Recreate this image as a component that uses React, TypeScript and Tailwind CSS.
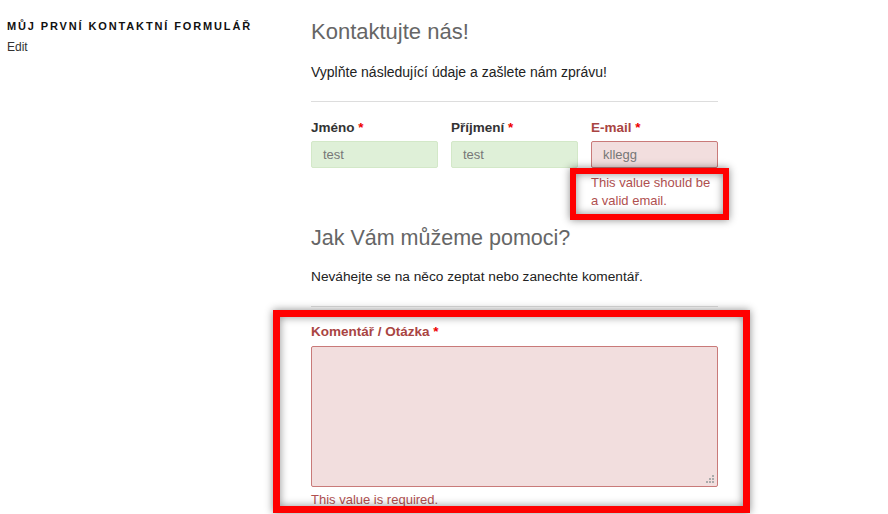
import React from "react";

const font = { fontFamily: '"Liberation Sans", Arial, sans-serif' };

function Label({ text, error }: { text: string; error?: boolean }) {
  return (
    <div className={`text-[13.5px] leading-[20px] font-bold ${error ? "text-[#a94442]" : "text-[#333]"}`}>
      {text} <span className="text-[#e00]">*</span>
    </div>
  );
}

function Field({ label, value, error }: { label: string; value: string; error?: boolean }) {
  return (
    <div className="w-[127px]">
      <Label text={label} error={error} />
      <div
        className={`mt-[3px] h-[27px] rounded-[2px] border px-[11px] flex items-center text-[13px] text-[#777] ${
          error ? "bg-[#f2dede] border-[#c97a79]" : "bg-[#dff0d8] border-[#d3e8c8]"
        }`}
      >
        {value}
      </div>
    </div>
  );
}

export default function App() {
  return (
    <div className="relative w-[888px] h-[514px] overflow-hidden bg-white flex" style={font}>
      <aside className="w-[311px] shrink-0 pl-[7px] pt-[19px]">
        <div className="text-[11px] leading-[14px] font-extrabold tracking-[0.17em] text-[#111] whitespace-nowrap">
          MŮJ PRVNÍ KONTAKTNÍ FORMULÁŘ
        </div>
        <div className="mt-[7px] text-[12px] leading-[14px] text-[#333]">Edit</div>
      </aside>

      <main className="w-[407px] pt-[18px]">
        <h2 className="text-[22px] leading-[28px] font-light text-[#666]">Kontaktujte nás!</h2>
        <p className="mt-[16px] text-[14px] leading-[20px] text-[#222]">
          Vyplňte následující údaje a zašlete nám zprávu!
        </p>
        <div className="mt-[19px] h-px bg-[#ddd]" />

        <div className="mt-[16px] flex gap-[13px]">
          <Field label="Jméno" value="test" />
          <Field label="Příjmení" value="test" />
          <div>
            <Field label="E-mail" value="kllegg" error />
            <div className="mt-[6px] text-[13px] leading-[18px] text-[#b0504f] whitespace-nowrap">
              This value should be
              <br />
              a valid email.
            </div>
          </div>
        </div>

        <h2 className="mt-[14px] text-[21.5px] leading-[28px] font-light text-[#666]">Jak Vám můžeme pomoci?</h2>
        <p className="mt-[15px] text-[13.7px] leading-[20px] text-[#222]">
          Neváhejte se na něco zeptat nebo zanechte komentář.
        </p>
        <div className="mt-[19px] h-px bg-[#ddd]" />

        <div className="mt-[15px]">
          <Label text="Komentář / Otázka" error />
          <div className="relative mt-[4px] h-[141px] rounded-[2px] border border-[#c97a79] bg-[#f2dede]">
            <svg className="absolute right-[3px] bottom-[3px]" width="8" height="8" viewBox="0 0 8 8">
              <g fill="#aaa">
                <rect x="6" y="0" width="2" height="2" />
                <rect x="3" y="3" width="2" height="2" />
                <rect x="6" y="3" width="2" height="2" />
                <rect x="0" y="6" width="2" height="2" />
                <rect x="3" y="6" width="2" height="2" />
                <rect x="6" y="6" width="2" height="2" />
              </g>
            </svg>
          </div>
          <div className="mt-[4px] text-[13px] leading-[18px] text-[#b0504f]">This value is required.</div>
        </div>
      </main>

      {/* annotation boxes drawn over the screenshot */}
      <div className="absolute left-[570px] top-[168px] w-[159px] h-[52px] border-[6px] border-[#ff0000] shadow-[inset_0_0_8px_rgba(0,0,0,0.45),0_0_8px_rgba(0,0,0,0.45)]" />
      <div className="absolute left-[273px] top-[310px] w-[477px] h-[203px] border-[7px] border-[#ff0000] shadow-[inset_0_0_8px_rgba(0,0,0,0.45),0_0_8px_rgba(0,0,0,0.45)]" />
    </div>
  );
}
